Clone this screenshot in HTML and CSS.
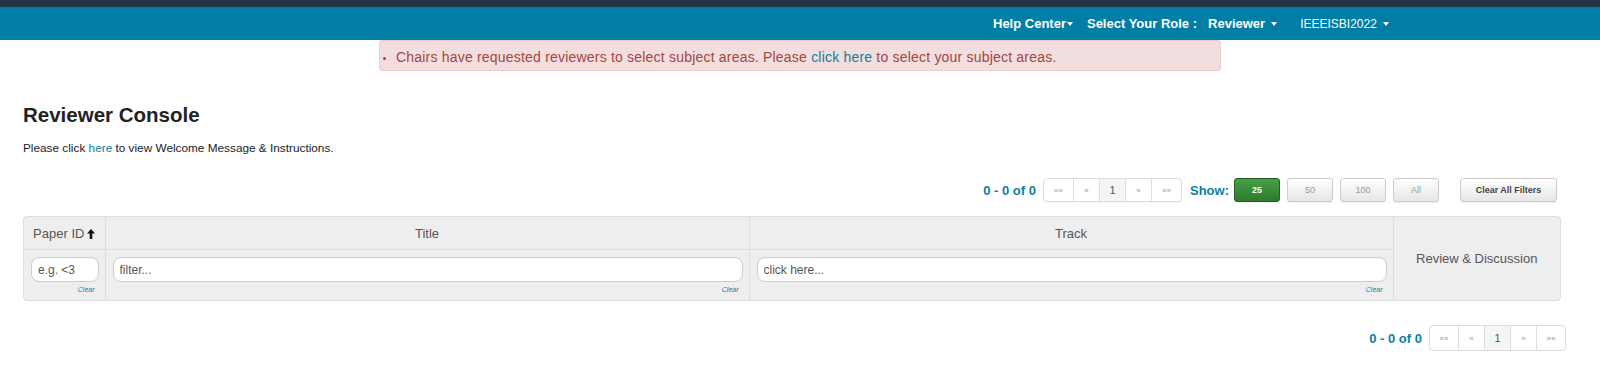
FILE: index.html
```html
<!DOCTYPE html>
<html lang="en">
<head>
<meta charset="UTF-8">
<title>Reviewer Console</title>
<link rel="stylesheet" href="styles.css">
</head>
<body>
<div class="topstrip"></div>
<nav class="navbar">
  <a class="nav-item help">Help Center<span class="caret"></span></a>
  <span class="nav-label">Select Your Role :</span>
  <a class="nav-item role">Reviewer<span class="caret"></span></a>
  <a class="nav-item conf">IEEEISBI2022<span class="caret"></span></a>
</nav>

<div class="alert">
  <ul>
    <li>Chairs have requested reviewers to select subject areas. Please <a href="#">click here</a> to select your subject areas.</li>
  </ul>
</div>

<div class="main">
  <h1>Reviewer Console</h1>
  <p class="intro">Please click <a href="#">here</a> to view Welcome Message &amp; Instructions.</p>

  <div class="toolbar">
    <span class="count">0 - 0 of 0</span>
    <ul class="pager">
      <li class="wide">&laquo;&laquo;</li>
      <li>&laquo;</li>
      <li class="current">1</li>
      <li>&raquo;</li>
      <li class="wide">&raquo;&raquo;</li>
    </ul>
    <span class="show">Show:</span>
    <button class="btn size active">25</button>
    <button class="btn size">50</button>
    <button class="btn size">100</button>
    <button class="btn size">All</button>
    <button class="btn clear-all">Clear All Filters</button>
  </div>

  <div class="grid-wrap">
    <table class="grid">
      <colgroup>
        <col class="c-id">
        <col class="c-title">
        <col class="c-track">
        <col>
      </colgroup>
      <tr class="head">
        <th>Paper ID<svg class="sort" width="8" height="10" viewBox="0 0 8 10"><path d="M4 0 L8 4.5 L5.3 4.5 L5.3 10 L2.7 10 L2.7 4.5 L0 4.5 Z" fill="#111"/></svg></th>
        <th>Title</th>
        <th>Track</th>
        <th rowspan="2" class="review">Review &amp; Discussion</th>
      </tr>
      <tr class="filters">
        <td><input type="text" placeholder="e.g. &lt;3"><span class="clear">Clear</span></td>
        <td><input type="text" placeholder="filter..."><span class="clear">Clear</span></td>
        <td><input type="text" placeholder="click here..."><span class="clear">Clear</span></td>
      </tr>
    </table>
  </div>

  <div class="toolbar bottom">
    <span class="count">0 - 0 of 0</span>
    <ul class="pager">
      <li class="wide">&laquo;&laquo;</li>
      <li>&laquo;</li>
      <li class="current">1</li>
      <li>&raquo;</li>
      <li class="wide">&raquo;&raquo;</li>
    </ul>
  </div>
</div>
</body>
</html>
```

FILE: styles.css
```css
body{margin:0;font-family:"Liberation Sans",Arial,sans-serif;color:#222;background:#fff;}
a{color:#0a7ea6;text-decoration:none;}

.topstrip{height:7px;background:#243447;}
.navbar{height:33px;background:#007ea5;display:flex;align-items:center;padding-left:993px;color:#fff;font-size:13px;font-weight:bold;}
.nav-item{color:#fff;display:flex;align-items:center;}
.nav-label{margin-left:14px;}
.role{margin-left:11px;}
.conf{margin-left:23px;font-weight:normal;font-size:12px;}
.caret{display:inline-block;width:0;height:0;border-top:4px solid #fff;border-left:3.5px solid transparent;border-right:3.5px solid transparent;margin-left:6px;}
.help .caret{margin-left:1px;}

.alert{box-sizing:border-box;width:842px;height:31px;margin:0 auto;background:#f2dede;border:1px solid #ebccd1;border-radius:3px;color:#a94442;font-size:14px;letter-spacing:0.2px;}
.alert ul{margin:0;padding:8px 0 0 16px;line-height:17px;}
.alert li::marker{font-size:10px;}

.main{padding:0 39px 0 23px;}
h1{margin:32px 0 0;font-size:20.5px;line-height:24px;color:#222;}
.intro{margin:13px 0 0;font-size:11.8px;line-height:16px;color:#222;}

.toolbar{display:flex;justify-content:flex-end;align-items:center;margin-top:22px;padding-right:4px;height:24px;}
.count{font-size:13px;font-weight:bold;color:#0a7ea6;margin-right:7px;}
.pager{display:flex;list-style:none;margin:0;padding:0;border:1px solid #ddd;border-radius:4px;box-shadow:0 1px 2px rgba(0,0,0,0.05);height:22px;}
.pager li{width:25px;display:flex;align-items:center;justify-content:center;font-size:8px;color:#999;border-left:1px solid #ddd;}
.pager li:first-child{border-left:none;}
.pager li.wide{width:29px;}
.pager li.current{background:#f5f5f5;color:#555;font-size:11px;}
.show{font-size:13px;font-weight:bold;color:#0a7ea6;margin:0 5px 0 8px;}
.btn{height:24px;border:1px solid #ccc;border-radius:3px;background:linear-gradient(#fff,#e6e6e6);color:#999;font-family:inherit;font-size:9px;padding:0;box-shadow:0 1px 1px rgba(0,0,0,0.06);}
.size{width:46px;margin-left:7px;}
.size.active{margin-left:0;background:linear-gradient(#47a047,#2d7a2d);border-color:#235e23;color:#fff;font-weight:bold;}
.clear-all{width:97px;margin-left:21px;font-weight:bold;color:#444;}

.grid-wrap{margin-top:14px;border:1px solid #ddd;border-radius:4px;overflow:hidden;background:#eee;}
.grid{width:100%;border-collapse:collapse;table-layout:fixed;}
.c-id{width:81px;}
.c-title{width:644px;}
.c-track{width:644px;}
.grid th{font-weight:normal;font-size:13px;color:#555;height:32px;padding:0;border-left:1px solid #ddd;}
.grid th:first-child{border-left:none;}
.grid .review{border-left:1px solid #ddd;}
.sort{margin-left:3px;vertical-align:-1px;}
.filters td{height:50px;padding:0 6px 0 7px;border-top:1px solid #ddd;border-left:1px solid #ddd;vertical-align:top;}
.filters td:first-child{border-left:none;}
.filters input{box-sizing:border-box;display:block;width:100%;height:25px;margin-top:7px;border:1px solid #ccc;border-radius:8px;padding:0 6px;font-family:inherit;font-size:12px;color:#555;background:#fff;}
.filters input::placeholder{color:#555;}
.clear{display:block;text-align:right;font-size:7px;font-style:italic;color:#0a7ea6;padding-right:4px;margin-top:3px;line-height:9px;}

.toolbar.bottom{margin-top:24px;padding-right:0;margin-right:-5px;height:26px;}
.bottom .pager{height:24px;}
.bottom .pager li.wide{width:28px;}
.bottom .pager li{width:25px;}
```
